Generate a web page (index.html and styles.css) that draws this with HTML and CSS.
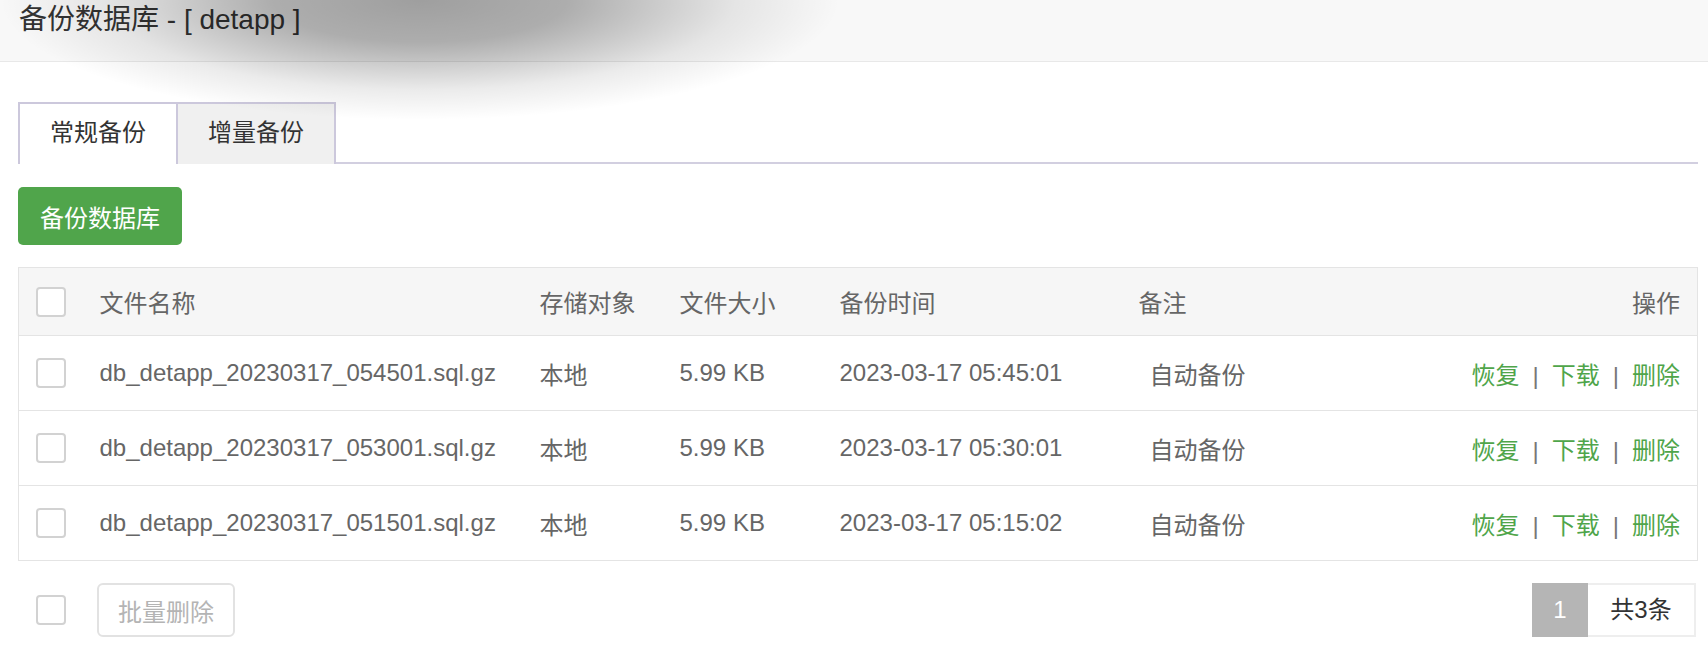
FILE: index.html
```html
<!DOCTYPE html>
<html lang="zh-CN">
<head>
  <meta charset="UTF-8" />
  <meta name="viewport" content="width=device-width, initial-scale=1.0" />
  <title>备份数据库</title>
  <link rel="stylesheet" href="styles.css">
</head>
<body>
  <div class="layer">
    <div class="layer-title">备份数据库 - [ detapp ]</div>
    <div class="layer-body">
      <div class="tabs">
        <span class="tab on">常规备份</span>
        <span class="tab">增量备份</span>
      </div>
      <button class="btn-green">备份数据库</button>
      <table class="backup-table">
        <thead>
          <tr>
            <th class="c-check"><span class="checkbox"></span></th>
            <th class="c-name">文件名称</th>
            <th class="c-store">存储对象</th>
            <th class="c-size">文件大小</th>
            <th class="c-time">备份时间</th>
            <th class="c-note">备注</th>
            <th class="c-ops">操作</th>
          </tr>
        </thead>
        <tbody>
          <tr>
            <td class="c-check"><span class="checkbox"></span></td>
            <td>db_detapp_20230317_054501.sql.gz</td>
            <td>本地</td>
            <td>5.99 KB</td>
            <td>2023-03-17 05:45:01</td>
            <td><span class="note">自动备份</span></td>
            <td class="c-ops"><a>恢复</a><span class="sep">|</span><a>下载</a><span class="sep">|</span><a>删除</a></td>
          </tr>
          <tr>
            <td class="c-check"><span class="checkbox"></span></td>
            <td>db_detapp_20230317_053001.sql.gz</td>
            <td>本地</td>
            <td>5.99 KB</td>
            <td>2023-03-17 05:30:01</td>
            <td><span class="note">自动备份</span></td>
            <td class="c-ops"><a>恢复</a><span class="sep">|</span><a>下载</a><span class="sep">|</span><a>删除</a></td>
          </tr>
          <tr>
            <td class="c-check"><span class="checkbox"></span></td>
            <td>db_detapp_20230317_051501.sql.gz</td>
            <td>本地</td>
            <td>5.99 KB</td>
            <td>2023-03-17 05:15:02</td>
            <td><span class="note">自动备份</span></td>
            <td class="c-ops"><a>恢复</a><span class="sep">|</span><a>下载</a><span class="sep">|</span><a>删除</a></td>
          </tr>
        </tbody>
      </table>
      <div class="table-foot">
        <span class="checkbox"></span>
        <button class="btn-plain">批量删除</button>
        <div class="pager">
          <span class="page-cur">1</span>
          <span class="page-total">共3条</span>
        </div>
      </div>
    </div>
  </div>
  <div class="shade"></div>
</body>
</html>
```

FILE: styles.css
```css
body {
  margin: 0;
  background: #fff;
  font-family: "Liberation Sans", "Noto Sans CJK SC", sans-serif;
  font-size: 24px;
  color: #666;
  position: relative;
  overflow: hidden;
}
.layer-title {
  height: 61px;
  line-height: 40px;
  padding-left: 19px;
  font-size: 28px;
  color: #333;
  background: #f8f8f8;
  border-bottom: 1px solid #e8e8e8;
}
.layer-body {
  padding: 40px 10px 0 18px;
}
.tabs {
  display: flex;
  height: 60px;
  border-bottom: 2px solid #d2cfe0;
}
.tab {
  flex: none;
  width: 160px;
  box-sizing: border-box;
  height: 62px;
  line-height: 58px;
  text-align: center;
  color: #333;
  background: #f0f0f0;
  border: 2px solid #ccc8dc;
  border-bottom: none;
}
.tab + .tab {
  border-left: none;
  width: 158px;
}
.tab.on {
  background: #fff;
  position: relative;
  z-index: 1;
}
.btn-green {
  display: block;
  margin-top: 23px;
  height: 58px;
  width: 164px;
  padding: 0;
  border: none;
  border-radius: 5px;
  background: #50a54b;
  color: #fff;
  font: inherit;
}
.backup-table {
  margin-top: 22px;
  width: 1680px;
  table-layout: fixed;
  border-collapse: collapse;
  border: 1px solid #e4e4e4;
}
.backup-table th,
.backup-table td {
  padding: 0;
  text-align: left;
  font-weight: normal;
  white-space: nowrap;
  border-bottom: 1px solid #e4e4e4;
}
.backup-table th {
  height: 67px;
  background: #f6f6f6;
}
.backup-table td {
  height: 74px;
}
.backup-table .c-check { width: 81px; padding-left: 17px; box-sizing: border-box; }
.backup-table .c-name { width: 440px; }
.backup-table .c-store { width: 140px; }
.backup-table .c-size { width: 160px; }
.backup-table .c-time { width: 299px; }
.backup-table .c-note { width: 300px; }
.backup-table .c-ops {
  text-align: right;
  padding-right: 17px;
}
.checkbox {
  display: inline-block;
  vertical-align: middle;
  width: 30px;
  height: 30px;
  box-sizing: border-box;
  border: 2px solid #d2d2d2;
  border-radius: 4px;
  background: #fff;
}
.note {
  padding-left: 11px;
}
.c-ops a {
  color: #4fa54a;
}
.sep {
  margin: 0 13px;
  color: #777;
}
.table-foot {
  display: flex;
  align-items: center;
  margin-top: 22px;
  padding-left: 18px;
}
.btn-plain {
  margin-left: 31px;
  height: 54px;
  width: 138px;
  padding: 0;
  border: 2px solid #e2e2e2;
  border-radius: 6px;
  background: #fff;
  color: #b4b4b4;
  font: inherit;
}
.pager {
  margin-left: auto;
  margin-right: 2px;
  display: flex;
}
.page-cur {
  width: 56px;
  height: 54px;
  line-height: 54px;
  text-align: center;
  background: #b5b5b5;
  color: #fff;
}
.page-total {
  width: 108px;
  height: 54px;
  line-height: 50px;
  text-align: center;
  box-sizing: border-box;
  border: 2px solid #eee;
  border-left: none;
  color: #333;
}
.shade {
  position: absolute;
  left: 0;
  top: 0;
  width: 900px;
  height: 160px;
  pointer-events: none;
  background: radial-gradient(ellipse 420px 120px at 420px 0, rgba(0, 0, 0, 0.36) 0%, rgba(0, 0, 0, 0.3) 35%, rgba(0, 0, 0, 0.08) 75%, rgba(0, 0, 0, 0) 100%);
}
```
